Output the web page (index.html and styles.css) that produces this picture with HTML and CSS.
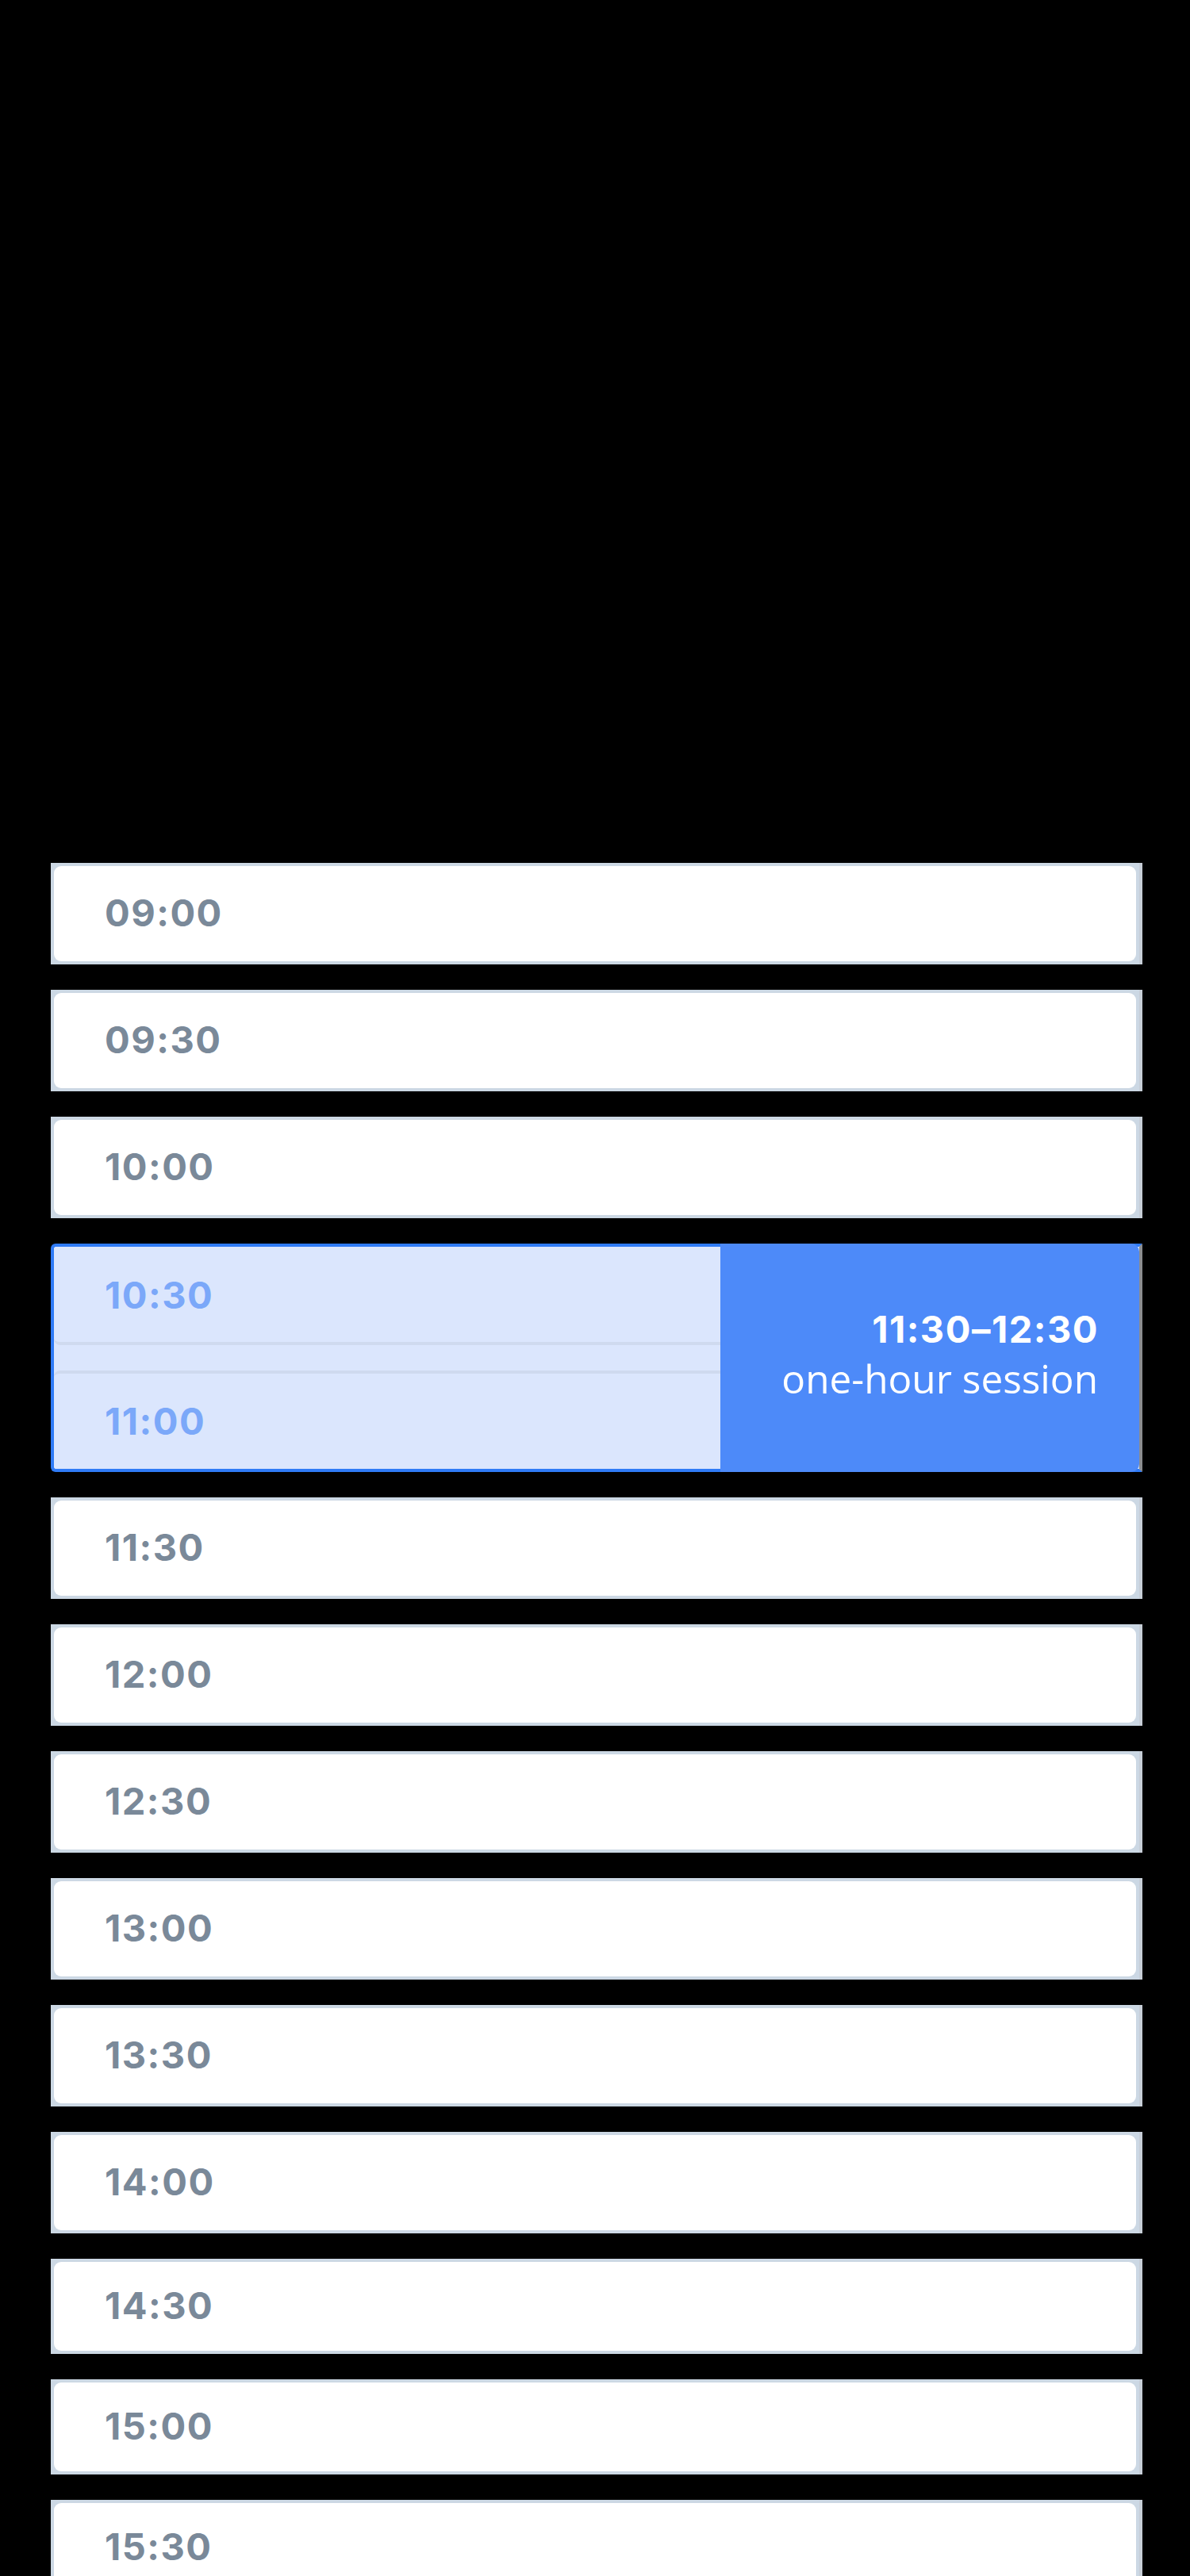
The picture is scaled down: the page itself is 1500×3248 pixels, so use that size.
FILE: index.html
```html
<!DOCTYPE html>
<html lang="en">
<head>
<meta charset="utf-8">
<title>Time slots</title>
<link rel="stylesheet" href="styles.css">
</head>
<body>
<main class="list">
  <div class="slot"><div class="slot-inner"><span class="time">09:00</span></div></div>
  <div class="slot"><div class="slot-inner"><span class="time">09:30</span></div></div>
  <div class="slot"><div class="slot-inner"><span class="time">10:00</span></div></div>
  <div class="range">
    <div class="range-slot range-first"><span class="time time-sel">10:30</span></div>
    <div class="range-slot range-second"><span class="time time-sel">11:00</span></div>
    <div class="session">
      <div class="session-time">11:30–12:30</div>
      <div class="session-label">one-hour session</div>
    </div>
  </div>
  <div class="slot"><div class="slot-inner"><span class="time">11:30</span></div></div>
  <div class="slot"><div class="slot-inner"><span class="time">12:00</span></div></div>
  <div class="slot"><div class="slot-inner"><span class="time">12:30</span></div></div>
  <div class="slot"><div class="slot-inner"><span class="time">13:00</span></div></div>
  <div class="slot"><div class="slot-inner"><span class="time">13:30</span></div></div>
  <div class="slot"><div class="slot-inner"><span class="time">14:00</span></div></div>
  <div class="slot slot-compact"><div class="slot-inner"><span class="time">14:30</span></div></div>
  <div class="slot slot-compact"><div class="slot-inner"><span class="time">15:00</span></div></div>
  <div class="slot slot-compact"><div class="slot-inner"><span class="time">15:30</span></div></div>
</main>
</body>
</html>
```

FILE: styles.css
```css
* {
  box-sizing: border-box;
}

html, body {
  margin: 0;
  padding: 0;
  background: #000;
}

body {
  font-family: "Inter", "Liberation Sans", sans-serif;
}

.list {
  display: flex;
  flex-direction: column;
  gap: 32px;
  width: 1376px;
  margin-left: 64px;
  padding-top: 1088px;
}

.slot {
  height: 128px;
  background: #ccd8e4;
  padding: 4px 4px 4px 4px;
  border-right: 4px solid #c7ced7;
}

.slot-compact {
  height: 120px;
}

.slot-inner {
  height: 100%;
  background: #fff;
  border-radius: 9px;
  display: flex;
  align-items: center;
  padding-left: 64px;
  padding-bottom: 3px;
}

.time {
  font-family: "Inter", "Liberation Sans", sans-serif;
  font-weight: 700;
  font-size: 47px;
  letter-spacing: 1.5px;
  color: #7a8999;
  line-height: 1;
}

.time-sel {
  color: #7ba8f9;
}

.range {
  position: relative;
  height: 288px;
  display: flex;
  flex-direction: column;
  gap: 32px;
  background: #dbe6fd;
  border: 4px solid #2f7bf6;
  border-right: 4px solid #8b8d90;
  border-radius: 6px 0 0 6px;
}

.range-slot {
  height: 124px;
  display: flex;
  align-items: center;
  padding-left: 64px;
  background: #dbe6fd;
}

.range-first {
  border-bottom: 4px solid #cfdaef;
  border-radius: 6px 6px 8px 8px;
  padding-top: 1px;
}

.range-second {
  border-top: 4px solid #cfdaef;
  border-radius: 8px 8px 6px 6px;
  padding-bottom: 2px;
}

.session {
  position: absolute;
  top: -4px;
  bottom: -4px;
  right: 0;
  width: 528px;
  background: #4d8af9;
  border-radius: 0 10px 10px 0;
  display: flex;
  flex-direction: column;
  justify-content: center;
  align-items: flex-end;
  padding-right: 52px;
  padding-bottom: 5px;
  color: #fff;
}

.session-time {
  font-family: "Inter", "Liberation Sans", sans-serif;
  font-weight: 700;
  font-size: 47px;
  letter-spacing: 1.5px;
  line-height: 56px;
  margin-right: -1px;
}

.session-label {
  font-family: "Open Sans", "Noto Sans", sans-serif;
  font-weight: 400;
  font-size: 49.5px;
  line-height: 68px;
}
```
